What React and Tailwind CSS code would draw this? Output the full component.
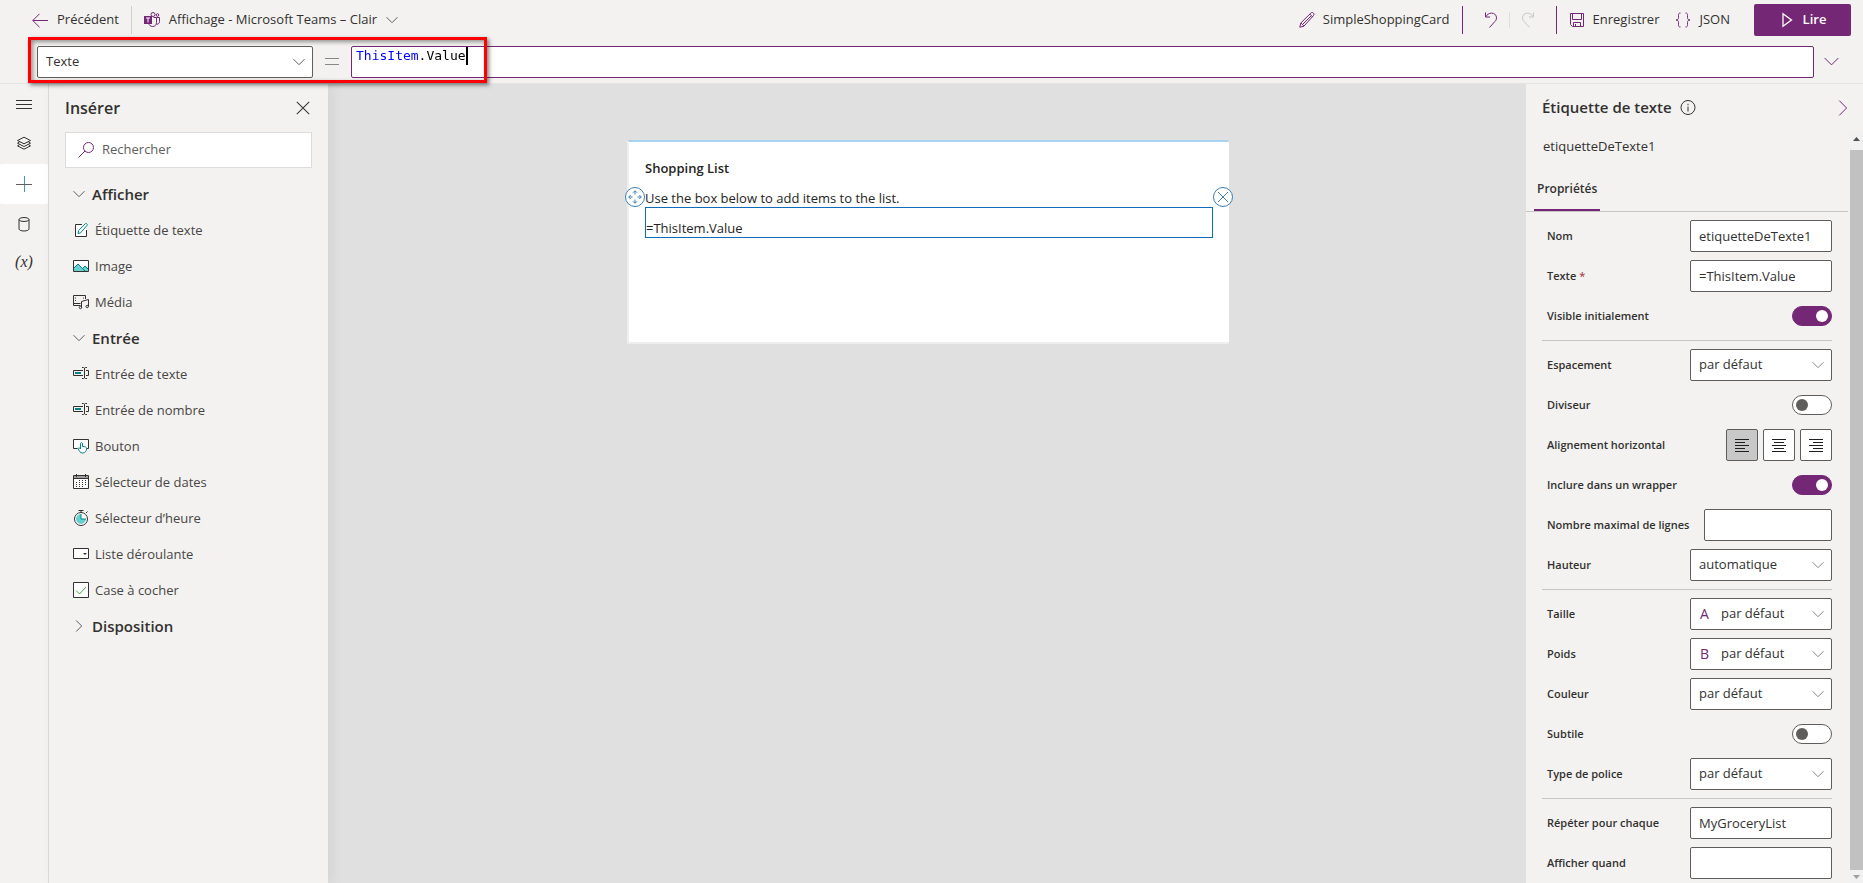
import React, { useState } from 'react';

const SANS = "font-['Open_Sans','Noto_Sans',sans-serif]";

const Chevron = ({ className = '', size = 12 }) => (
  <svg className={className} width={size} height={size} viewBox="0 0 12 12" fill="none" stroke="currentColor" strokeWidth={12 / size}>
    <path d="M.5 3.2 6 8.7l5.5-5.5" />
  </svg>
);

const Line = ({ size = 16, className = '', children }) => (
  <svg className={className} width={size} height={size} viewBox="0 0 16 16" fill="none" stroke="currentColor">{children}</svg>
);

const ArrowLeft = () => <Line className="text-[#742774]"><path d="M16 8.500H.8M7.500 1.800.8 8.500l6.700 6.700" /></Line>;
const Pencil = () => (
  <Line className="text-[#742774]"><path d="m.8 15.200 1-4.200L12 .9c.6-.6 1.700-.5 2.400.1s.8 1.800.1 2.500L4.900 14.200.8 15.200ZM1.900 11l3.100 3.100M10.800 2.100l3.100 3.100M4 12 12 4" /></Line>
);
const Undo = ({ className = '' }) => (
  <Line className={className}><path d="M2.500 .5v4.500H7M2.700 4.800C4 2.700 6 1.100 8.500 1.100c3 0 5 2 5 4.800 0 1.500-.6 2.600-1.600 3.600L6.500 15.500" /></Line>
);
const Save = () => (
  <Line className="text-[#742774]"><path d="M1.500 1.500h13v13h-11l-2-2zM3.500 1.500v6h9v-6M4.500 14.500v-4h7v4M6.500 12v2.500" /></Line>
);
const Braces = () => (
  <Line className="text-[#742774]"><path d="M5.500 1C3.500 1 3.500 2 3.500 3.500v2C3.500 7 3 8 1 8c2 0 2.500 1 2.500 2.500v2c0 1.500 0 2.500 2 2.500M10.500 1c2 0 2 1 2 2.500v2C12.500 7 13 8 15 8c-2 0-2.500 1-2.500 2.500v2c0 1.500 0 2.500-2 2.500" /></Line>
);
const Teams = () => (
  <svg width="16" height="16" viewBox="0 0 16 16" fill="none" stroke="#742774">
    <circle cx="9" cy="2.500" r="2" />
    <circle cx="13.500" cy="3" r="1.300" />
    <path d="M9.500 5.500h3v5c0 2.500-1.500 4-3.800 4S5 13 4.800 11.500M12.500 5.500h3v4c0 1.700-1 2.700-2.800 2.800" />
    <path d="M0 4h8v8H0z" fill="#742774" stroke="none" />
    <path d="M2 6h4M4 6v4.500" stroke="#fff" />
  </svg>
);

const rail = [
  { id: 'menu', label: 'Menu', icon: <path d="M0 4.500h16M0 8.500h16M0 12.500h16" /> },
  { id: 'tree', label: 'Arborescence', icon: <path d="M8 1.200 14.500 4.500 8 7.800 1.500 4.500zM3.500 6 1.500 7.200 8 10.500l6.500-3.300L12.500 6M3.500 8.700 1.500 9.900 8 13.200l6.500-3.300-2-1.200" /> },
  { id: 'insert', label: 'Insérer', icon: <><path d="M8.500 0v16" stroke="#4a90c4" /><path d="M0 8.500h16" stroke="#605e5c" /></> },
  { id: 'data', label: 'Données', icon: <><ellipse cx="8" cy="3.500" rx="5" ry="2" /><path d="M3 3.500v9.500c0 1.100 2.200 2 5 2s5-.9 5-2V3.500" /></> },
  { id: 'vars', label: 'Variables', text: '(x)' },
];

const icons = {
  label: <><path d="M9 2.500H2.500v12h11V8" fill="#fff" /><path d="m5 11.500.7-3L12.500 1.500c.6-.6 2.300.9 1.700 1.700L7.600 10.800z" fill="#fff" stroke="#038387" /></>,
  image: <><path d="M.5 2.500h15v11H.5z" fill="#fff" /><path d="m1 10 4-4 4.500 4.500L12 8l3 3v2H1z" fill="#69cfcf" stroke="none" /><path d="m1 10 4-4 7 7M9.500 10.500 12 8l3 3" stroke="#038387" /></>,
  media: <><path d="M7.500 11.500H.5v-10h12V5M7.500 9.500H1M2.500 3.500v1M2.500 6v1M10.500 3.500v1" /><path d="M8.500 13.500V7.500l7-2v7" /><circle cx="7.500" cy="13.500" r="1.200" /><circle cx="14.200" cy="12.500" r="1.200" /></>,
  input: <><path d="M10 4.500H.5v5H10M13 4.500h2.500v5H13M11.500 2v10M9 1.500h1.500l1 .7 1-.7H14M9 12.500h1.500l1-.7 1 .7H14" /><path d="M2 6h6v2H2z" fill="#038387" stroke="none" /></>,
  button: <><path d="M4.500 10.500h-4v-9h15v9h-2" fill="#fff" /><path d="M7.500 10V5.700c0-1.400 2-1.400 2 0V8.500c2.500 0 4 .4 4 2 0 2.500-1 4.500-4 4.500-2.500 0-3-2-4.500-4.500.5-1 1.500-1 2.500.5z" fill="#fff" stroke="#038387" /></>,
  date: <><path d="M.5 1.500h15v13H.5z" fill="#fff" /><path d="M1 2h14v2H1z" fill="#a19f9d" stroke="none" /><path d="M.5 4.500h15M3.500 0v3M12.500 0v3" /><path d="M6 6.500h8M3 8.500h11M3 10.500h11M3 12.500h8" strokeDasharray="1 2" /></>,
  time: <><circle cx="8" cy="9" r="6.500" fill="#fff" /><path d="M8 9V4a5 5 0 1 0 5 5z" fill="#69cfcf" stroke="none" /><path d="M8 4v5h5" stroke="#038387" /><path d="M5.500.5h5M8 .5v2M13 3l1.500-1.500" /></>,
  dropdown: <><path d="M.5 2.500h15v10H.5z" fill="#fff" /><path d="M10 7h4l-2 2z" fill="#323130" stroke="none" /></>,
  check: <><path d="M.5.5h15v15H.5z" fill="#fff" /><path d="m3 8.500 3.500 3.500L13 5" stroke="#43a843" /></>,
};

const groups = [
  { title: 'Afficher', open: true, items: [['label', 'Étiquette de texte'], ['image', 'Image'], ['media', 'Média']] },
  { title: 'Entrée', open: true, items: [
    ['input', 'Entrée de texte'], ['input', 'Entrée de nombre'], ['button', 'Bouton'], ['date', 'Sélecteur de dates'],
    ['time', 'Sélecteur d’heure'], ['dropdown', 'Liste déroulante'], ['check', 'Case à cocher'],
  ] },
  { title: 'Disposition', open: false, items: [] },
];

const sections = [
  [
    { id: 'nom', label: 'Nom', type: 'text', value: 'etiquetteDeTexte1' },
    { id: 'texte', label: 'Texte', type: 'text', value: '=ThisItem.Value', required: true },
    { id: 'visible', label: 'Visible initialement', type: 'switch', value: true },
  ],
  [
    { id: 'espacement', label: 'Espacement', type: 'select', value: 'par défaut' },
    { id: 'diviseur', label: 'Diviseur', type: 'switch', value: false },
    { id: 'align', label: 'Alignement horizontal', type: 'align' },
    { id: 'wrapper', label: 'Inclure dans un wrapper', type: 'switch', value: true },
    { id: 'lignes', label: 'Nombre maximal de lignes', type: 'text', value: '', narrow: true },
    { id: 'hauteur', label: 'Hauteur', type: 'select', value: 'automatique' },
  ],
  [
    { id: 'taille', label: 'Taille', type: 'select', value: 'par défaut', prefix: 'A' },
    { id: 'poids', label: 'Poids', type: 'select', value: 'par défaut', prefix: 'B' },
    { id: 'couleur', label: 'Couleur', type: 'select', value: 'par défaut' },
    { id: 'subtile', label: 'Subtile', type: 'switch', value: false },
    { id: 'police', label: 'Type de police', type: 'select', value: 'par défaut' },
  ],
  [
    { id: 'repeter', label: 'Répéter pour chaque', type: 'text', value: 'MyGroceryList' },
    { id: 'quand', label: 'Afficher quand', type: 'text', value: '' },
  ],
];

function TopBar() {
  return (
    <header className="flex h-10 items-center pl-8 pr-3 text-[13px]">
      <button className="flex items-center gap-[9px]"><ArrowLeft />Précédent</button>
      <span className="mx-3 h-7 w-px bg-[#d2d0ce]" />
      <button className="flex items-center gap-[9px]"><Teams />Affichage - Microsoft Teams – Clair<Chevron className="text-[#605e5c]" /></button>
      <div className="ml-auto flex items-center">
        <button className="flex items-center gap-2"><Pencil />SimpleShoppingCard</button>
        <span className="ml-3 mr-5 h-7 w-px bg-[#742774]" />
        <button aria-label="Annuler"><Undo className="text-[#742774]" /></button>
        <span className="mx-2.5 h-4 w-px bg-[#e1dfdd]" />
        <button aria-label="Rétablir"><Undo className="-scale-x-100 text-[#c8c6c4]" /></button>
        <span className="ml-5 mr-3 h-7 w-px bg-[#742774]" />
        <button className="flex items-center gap-2"><Save />Enregistrer</button>
        <button className="ml-4 flex items-center gap-2"><Braces />JSON</button>
        <button className="ml-6 flex h-8 w-[97px] items-center justify-center gap-2 rounded-xs bg-[#742774] font-semibold text-white">
          <Line><path d="M4 1.800v12.400L12.500 8z" strokeWidth="1.300" /></Line>Lire
        </button>
      </div>
    </header>
  );
}

function FormulaBar() {
  const [formula, setFormula] = useState('ThisItem.Value');
  return (
    <div className="relative flex h-11 items-start border-b border-[#e6e4e2] pl-[37px] pr-6 pt-1.5">
      <div className="relative w-[276px]">
        <select aria-label="Propriété" className="h-8 w-full appearance-none rounded-xs border border-[#605e5c] bg-white px-2 text-[13px]">
          <option>Texte</option>
        </select>
        <Chevron className="pointer-events-none absolute right-2 top-2.5 text-[#605e5c]" />
      </div>
      <svg className="mx-3 mt-2.5 text-[#8a8886]" width="14" height="12" fill="none" stroke="currentColor"><path d="M0 2.500h14M0 8.500h14" /></svg>
      <div className="flex h-8 flex-1 items-start rounded-xs border border-[#742774] bg-white pl-1">
        <input
          aria-label="Formule"
          value={formula}
          onChange={e => setFormula(e.target.value)}
          className="field-sizing-content h-[18px] bg-[linear-gradient(90deg,#0000ff_8ch,#000_8ch)] bg-clip-text font-['DejaVu_Sans_Mono',monospace] text-[13px] text-transparent outline-none"
        />
        <span className="h-[18px] w-0.5 bg-black" />
      </div>
      <button aria-label="Développer" className="ml-2.5 mt-2 text-[#742774]"><Chevron size={15} /></button>
      {/* callout around the property picker and the start of the formula */}
      <div className="pointer-events-none absolute -top-[3px] left-7 h-[46px] w-[459px] border-3 border-[#fe0000] shadow-[2px_2px_4px_rgba(0,0,0,0.5),inset_2px_2px_4px_rgba(0,0,0,0.4)]" />
    </div>
  );
}

function Rail() {
  return (
    <nav className="flex w-[49px] shrink-0 flex-col border-r border-[#dddbd9]">
      {rail.map(r => (
        <button key={r.id} aria-label={r.label} className={r.id === 'insert' ? 'flex h-10 items-center justify-center rounded-xs bg-white' : 'flex h-10 items-center justify-center'}>
          {r.text
            ? <span className="pb-1 font-['Liberation_Serif',serif] text-base italic leading-5">{r.text}</span>
            : <Line>{r.icon}</Line>}
        </button>
      ))}
    </nav>
  );
}

function InsertPanel() {
  return (
    <aside className="z-10 w-[279px] shrink-0 px-4 shadow-[4px_0_12px_rgba(0,0,0,0.06)]">
      <div className="flex h-12 items-center justify-between">
        <h2 className="text-base font-semibold">Insérer</h2>
        <button aria-label="Fermer"><Line size={18}><path d="m2.500 2.500 11 11m0-11-11 11" strokeWidth=".9" /></Line></button>
      </div>
      <label className="flex h-9 items-center gap-2 border border-[#dddbd9] bg-white px-3">
        <Line className="text-[#742774]"><circle cx="10.500" cy="5.500" r="5" /><path d="M7 9 .5 15.500" /></Line>
        <input aria-label="Rechercher" placeholder="Rechercher" className="min-w-0 flex-1 text-[13px] outline-none placeholder:text-[#605e5c]" />
      </label>
      <div className="pl-2 pt-2">
        {groups.map(g => (
          <section key={g.title}>
            <button className="flex h-9 items-center gap-[7px] text-[15px] font-semibold">
              <Chevron className={g.open ? 'text-[#605e5c]' : '-rotate-90 text-[#605e5c]'} />{g.title}
            </button>
            {g.items.map(([icon, text]) => (
              <button key={text} className="flex h-9 w-full items-center gap-1.5 text-[13px] text-[#484644]">
                <Line className="text-[#323130]">{icons[icon]}</Line><span className="pt-0.5">{text}</span>
              </button>
            ))}
          </section>
        ))}
      </div>
    </aside>
  );
}

function Canvas() {
  return (
    <main className="flex min-w-0 flex-1 items-start justify-center bg-[#e0e0e0] pl-0.5 pt-14">
      <div className="min-h-[204px] w-[602px] rounded-xs border-2 border-r-0 border-[#eeeeee] border-t-[#a9d1f0] bg-white px-4 pt-[15px] text-[13px] text-[#252423]">
        <p className="h-[31px] font-semibold leading-[22px]">Shopping List</p>
        <p className="h-[19px] leading-5">Use the box below to add items to the list.</p>
        <div className="relative flex h-[31px] items-end border border-[#0f6cbd]">
          <p className="leading-[18px]">=ThisItem.Value</p>
          <button aria-label="Déplacer" className="absolute -left-[21px] -top-[21px] text-[#3b7fb8]">
            <svg width="20" height="20" viewBox="0 0 20 20" fill="none" stroke="currentColor">
              <circle cx="10" cy="10" r="9.500" fill="#fff" />
              <path d="M10 4v3.500M10 12.500V16M4 10h3.500M12.500 10H16M8 5.700l2-2 2 2M8 14.300l2 2 2-2M5.700 8l-2 2 2 2M14.300 8l2 2-2 2" />
            </svg>
          </button>
          <button aria-label="Supprimer" className="absolute -right-[21px] -top-[21px] text-[#3b7fb8]">
            <svg width="20" height="20" viewBox="0 0 20 20" fill="none" stroke="currentColor">
              <circle cx="10" cy="10" r="9.500" fill="#fff" />
              <path d="m5 5 10 10M15 5 5 15" />
            </svg>
          </button>
        </div>
      </div>
    </main>
  );
}

function AlignButtons({ labelledBy }) {
  const [align, setAlign] = useState('left');
  const paths = {
    left: 'M0 1.500h14M0 4.500h10M0 7.500h14M0 10.500h10M0 13.500h14',
    center: 'M0 1.500h14M2 4.500h10M0 7.500h14M2 10.500h10M0 13.500h14',
    right: 'M0 1.500h14M4 4.500h10M0 7.500h14M4 10.500h10M0 13.500h14',
  };
  return (
    <div role="group" aria-labelledby={labelledBy} className="flex gap-[5px]">
      {Object.keys(paths).map(k => (
        <button
          key={k}
          aria-label={k}
          aria-pressed={align === k}
          onClick={() => setAlign(k)}
          className={align === k
            ? 'flex size-8 items-center justify-center rounded-xs border border-[#605e5c] bg-[#c8c8c8]'
            : 'flex size-8 items-center justify-center rounded-xs border border-[#605e5c] bg-white'}
        >
          <svg width="14" height="15" stroke="#201f1e"><path d={paths[k]} /></svg>
        </button>
      ))}
    </div>
  );
}

function Field({ f }) {
  if (f.type === 'switch') {
    return (
      <input
        id={f.id}
        type="checkbox"
        role="switch"
        defaultChecked={f.value}
        className="h-5 w-10 appearance-none rounded-full border border-[#605e5c] bg-white before:ml-[3px] before:mt-[3px] before:block before:size-3 before:rounded-full before:bg-[#605e5c] checked:border-[#742774] checked:bg-[#742774] checked:before:ml-[23px] checked:before:bg-white"
      />
    );
  }
  if (f.type === 'align') return <AlignButtons labelledBy={`${f.id}-label`} />;
  if (f.type === 'select') {
    return (
      <div className="relative w-[142px]">
        {f.prefix && <span className="pointer-events-none absolute left-2.5 top-1.5 text-sm leading-5 text-[#742774]">{f.prefix}</span>}
        <select id={f.id} className={f.prefix
          ? 'h-8 w-full appearance-none rounded-xs border border-[#605e5c] bg-white pl-[30px] text-[13px]'
          : 'h-8 w-full appearance-none rounded-xs border border-[#605e5c] bg-white pl-2 text-[13px]'}>
          <option>{f.value}</option>
        </select>
        <Chevron className="pointer-events-none absolute right-2 top-2.5 text-[#8a8886]" />
      </div>
    );
  }
  return (
    <input
      id={f.id}
      defaultValue={f.value}
      className={f.narrow
        ? 'h-8 w-32 rounded-xs border border-[#605e5c] bg-white px-2 text-[13px] outline-none'
        : 'h-8 w-[142px] rounded-xs border border-[#605e5c] bg-white px-2 text-[13px] outline-none'}
    />
  );
}

function PropertiesPanel() {
  return (
    <aside className="flex w-[337px] shrink-0 flex-col">
      <div className="flex h-[47px] items-center pl-4 pr-3">
        <h2 className="text-[15px] font-semibold">Étiquette de texte</h2>
        <button aria-label="Informations" className="ml-2"><Line><circle cx="8" cy="7.500" r="7" /><path d="M8 6.500v5M8 3.800v1.400" /></Line></button>
        <button aria-label="Réduire" className="ml-auto text-[#742774]"><Chevron size={16} className="-rotate-90" /></button>
      </div>
      <div className="flex flex-1">
        <div className="flex-1">
          <p className="h-[37px] pl-[17px] text-[13px] leading-[30px]">etiquetteDeTexte1</p>
          <div role="tablist" className="mr-0.5 flex h-11 border-b border-[#c8c6c4] pl-2">
            <button role="tab" aria-selected="true" className="border-b-2 border-[#742774] px-[3px] text-[12px] font-semibold">Propriétés</button>
          </div>
          <div className="pl-4 pr-[18px] pt-1">
            {sections.map((s, i) => (
              <div key={i} className={i > 0 ? 'mt-1 border-t border-[#c8c6c4] pt-1' : ''}>
                {s.map(f => (
                  <div key={f.id} className="flex h-10 items-center justify-between pl-[5px]">
                    <label id={`${f.id}-label`} htmlFor={f.type === 'align' ? undefined : f.id} className="shrink-0 pt-px text-[11px] font-semibold">
                      {f.label}{f.required && <span className="font-normal text-[#a4262c]"> *</span>}
                    </label>
                    <Field f={f} />
                  </div>
                ))}
              </div>
            ))}
          </div>
        </div>
        <div className="flex w-[13px] flex-col items-center justify-between bg-[#f1f1f1]">
          <svg width="13" height="19"><path d="M3 10h7L6.500 6z" fill="#505050" /></svg>
          <div className="w-full flex-1 bg-[#c1c1c1]" />
          <svg width="13" height="13"><path d="M3 5h7L6.500 9z" fill="#a0a0a0" /></svg>
        </div>
      </div>
    </aside>
  );
}

export default function App() {
  return (
    <div className={`${SANS} flex min-h-screen flex-col bg-[#f3f2f1] text-[#323130]`}>
      <TopBar />
      <FormulaBar />
      <div className="flex flex-1">
        <Rail />
        <InsertPanel />
        <Canvas />
        <PropertiesPanel />
      </div>
    </div>
  );
}
